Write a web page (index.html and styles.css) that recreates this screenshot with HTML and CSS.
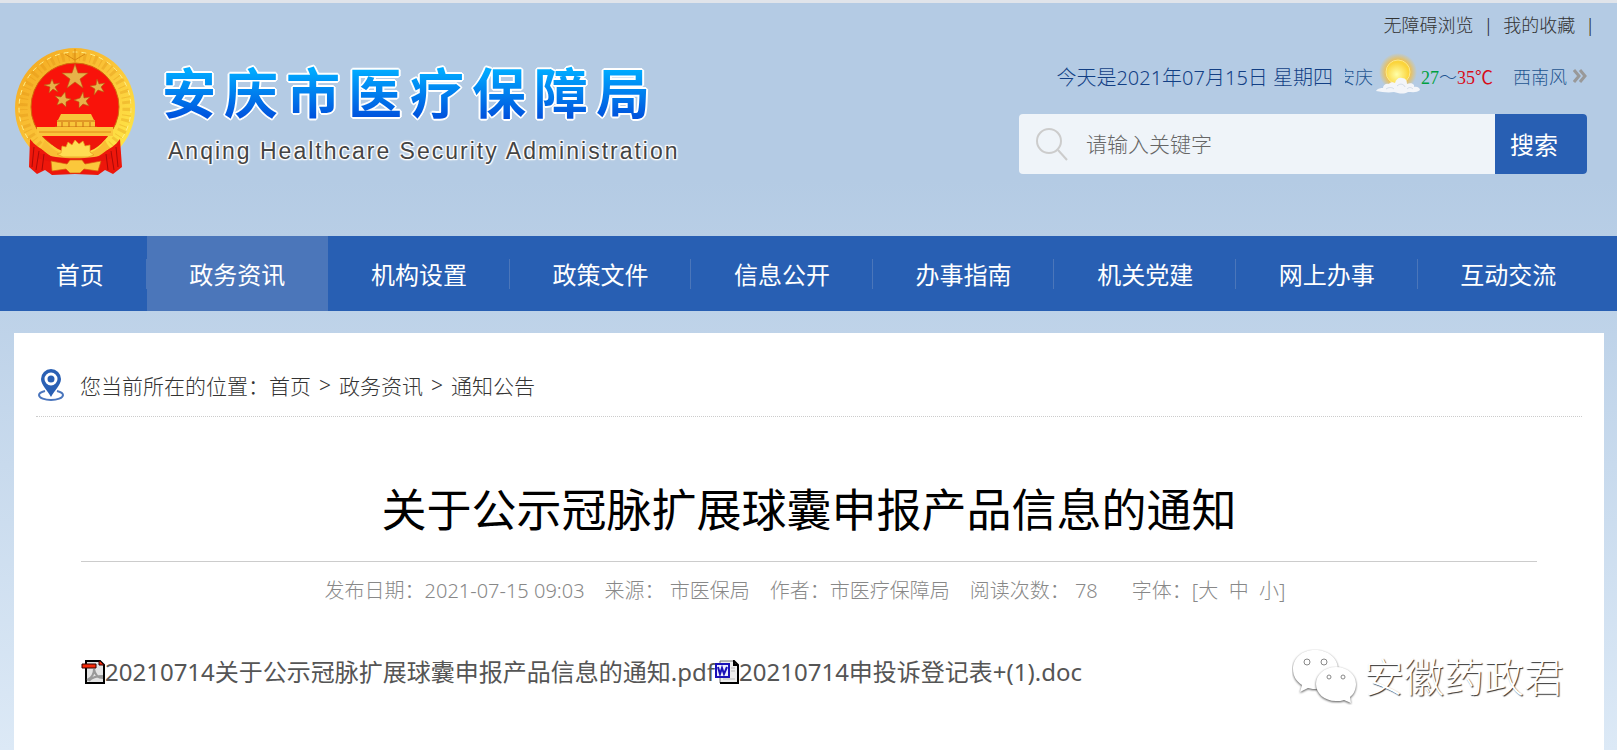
FILE: index.html
```html
<!DOCTYPE html>
<html lang="zh-CN">
    <head>
        <meta charset="utf-8">
        <title>关于公示冠脉扩展球囊申报产品信息的通知</title>
        <link rel="stylesheet" href="styles.css">
    </head>
    <body>
        <header class="header">
            <a class="logo" href="#">
                <svg class="emblem" viewBox="0 0 120 128" aria-hidden="true">
                    <defs>
                        <linearGradient id="gold" x1="0" y1="0" x2="1" y2="1">
                            <stop offset="0" stop-color="#f3a51c"/>
                            <stop offset=".5" stop-color="#fbc63a"/>
                            <stop offset="1" stop-color="#fff04a"/>
                        </linearGradient>
                    </defs>
                    <circle cx="60" cy="60" r="60" fill="url(#gold)"/>
                    <circle cx="60" cy="60" r="52" fill="none" stroke="#d98a12" stroke-width="9" stroke-dasharray="3 4 1 3" opacity=".3"/>
                    <circle cx="60" cy="60" r="56" fill="none" stroke="#fff08a" stroke-width="1" stroke-dasharray="5 4"/>
                    <path d="M60 1v13M50 6l10 6 10-6" stroke="#d98a12" stroke-width="1" fill="none"/>
                    <circle cx="60" cy="59" r="44" fill="#f9130a" stroke="#d2690c" stroke-width="1"/>
                    <g fill="#e8b149" stroke="#b85a10" stroke-width=".6">
                        <path d="M60 16l3 9h10l-8 6 3 9-8-6-8 6 3-9-8-6h10z"/>
                        <path d="M37 31l2 5 6-1-5 4 3 5-5-3-4 4 1-6-6-2 6-1z"/>
                        <path d="M82 31l-1 6-6 1 5 3-1 6 4-5 6 2-3-5 4-4-6 1z"/>
                        <path d="M50 44l1 6 5 1-5 3v5l-4-4-5 2 2-5-4-4 6 1z"/>
                        <path d="M68 44l1 6 6-1-4 4 3 5-6-2-4 4v-6l-5-2 6-2z"/>
                    </g>
                    <path d="M46 66h30l3 6H43zM42 72h38v7H42zM38 79h46v3H38z" fill="#f8c53a"/>
                    <path d="M42 73h38M40 79h42M47 82v-8M54 82v-8M61 82v-8M68 82v-8M75 82v-8" stroke="#c96a10" stroke-width="1"/>
                    <path d="M22 79h76v9H22z" fill="#fbc53b"/>
                    <path d="M24 84h72" stroke="#de8a17"/>
                    <path d="M30 89h62c-7 10-17 16-31 17-14-1-24-7-31-17z" fill="#ee170b"/>
                    <path d="M15 91c9 12 24 17 45 17s37-5 45-17l2 28-9 7-8-4-7 5-23-1-23 1-7-5-8 4-8-7z" fill="#ee170b"/>
                    <path d="M30 92c8 12 18 15 30 15s23-3 30-15l4 8c-9 9-20 14-34 14s-26-5-34-14z" fill="#f9bd34"/>
                    <path d="M46 105l1-7 4 1 2-5 4 3 3-5 4 4 4-3 2 5 5-1v7l4 3-6 2H48l-6-3z" fill="#ffdc52" stroke="#e79b1f" stroke-width=".7"/>
                    <path d="M24 105c20 7 52 7 72 0l1 5c-21 8-53 8-74 0z" fill="#e8130b"/>
                    <path d="M36 113l16 3 3-4h12l3 4 16-3-3 10-14-2-4 4H55l-4-4-14 2z" fill="#fbc73b" stroke="#d9610f" stroke-width=".7"/>
                    <path d="M19 99l-2 20M24 103l-3 19M29 106l-2 16M101 99l2 20M96 103l3 19M91 106l2 16" stroke="#a90a08" stroke-width="1"/>
                </svg>
                <span class="logo-text">
                    <span class="logo-name">安庆市医疗保障局</span>
                    <span class="logo-en" lang="en">Anqing Healthcare Security Administration</span>
                </span>
            </a>
            <div class="tools">
                <div class="links">
                    <a href="#">无障碍浏览</a><i>|</i>
                    <a href="#">我的收藏</a><i>|</i>
                </div>
                <div class="today">
                    <span class="date">今天是2021年07月15日 星期四</span>
                    <span class="city"><span>安庆</span></span>
                    <svg class="sun" viewBox="0 0 46 42" aria-hidden="true">
                        <defs>
                            <radialGradient id="glow">
                                <stop offset=".6" stop-color="#f3bf45"/>
                                <stop offset="1" stop-color="#f3bf45" stop-opacity="0"/>
                            </radialGradient>
                            <radialGradient id="ball" cx=".45" cy=".6">
                                <stop offset="0" stop-color="#ffffa8"/>
                                <stop offset="1" stop-color="#fbd43c"/>
                            </radialGradient>
                        </defs>
                        <circle cx="23" cy="19" r="19" fill="url(#glow)"/>
                        <circle cx="23" cy="19" r="12" fill="url(#ball)" stroke="#fbe88c"/>
                        <path d="M1 38c2-3 5-3 7-3 0-3 3-5 6-4 1-2 4-2 6-1 1-4 4-6 7-5 4 0 5 3 5 6 4-2 8 0 7 3 3-1 6 1 6 3-3 3-8 2-12 2-5 3-10 1-14 0-6 1-12 0-18-1z" fill="#f3f5f9"/>
                        <path d="M11 36c3-2 6-2 8 0M22 33c3-3 7-2 8 1M32 36c2-2 4-2 6 0" stroke="#d3dce8" stroke-width="1" fill="none"/>
                    </svg>
                    <span class="temp"><b class="low">27</b>～<b class="high">35℃</b></span>
                    <span class="wind">西南风</span>
                    <svg class="more" viewBox="0 0 14 14" aria-hidden="true">
                        <path d="M1 1l5 6-5 6M7 1l5 6-5 6" fill="none" stroke="#999" stroke-width="3"/>
                    </svg>
                </div>
                <form class="search">
                    <svg class="search-icon" viewBox="0 0 32 34" aria-hidden="true">
                        <circle cx="13" cy="14" r="12" fill="none" stroke="#ccc" stroke-width="2"/>
                        <path d="M22 23l9 10" stroke="#ccc" stroke-width="2"/>
                    </svg>
                    <input type="text" name="keyword" placeholder="请输入关键字" aria-label="请输入关键字">
                    <button type="button">搜索</button>
                </form>
            </div>
        </header>

        <nav class="nav">
            <a href="#">首页</a>
            <a class="active" href="#">政务资讯</a>
            <a href="#">机构设置</a>
            <a href="#">政策文件</a>
            <a href="#">信息公开</a>
            <a href="#">办事指南</a>
            <a href="#">机关党建</a>
            <a href="#">网上办事</a>
            <a href="#">互动交流</a>
        </nav>

        <main class="main">
            <div class="position">
                <svg class="pin" viewBox="0 0 26 32" aria-hidden="true">
                    <path d="M7 22c-4 1-6 2-6 4 0 3 6 5 12 5s12-2 12-5c0-2-2-3-6-4" fill="none" stroke="#4a75bc" stroke-width="2"/>
                    <path d="M13 28C10 22 3 16 3 10a10 10 0 0 1 20 0c0 6-7 12-10 18z" fill="#2a60b4"/>
                    <circle cx="13" cy="10" r="5" fill="#2a60b4" stroke="#fff" stroke-width="3"/>
                </svg>
                <span>您当前所在的位置：</span>
                <a href="#">首页</a><i>&gt;</i><a href="#">政务资讯</a><i>&gt;</i><a href="#">通知公告</a>
            </div>

            <article class="article">
                <h1>关于公示冠脉扩展球囊申报产品信息的通知</h1>
                <div class="info">
                    <span>发布日期：2021-07-15 09:03</span>
                    <span>来源： 市医保局</span>
                    <span>作者：市医疗保障局</span>
                    <span>阅读次数： 78</span>
                    <span class="size">字体：[<a href="#">大</a>&nbsp; <a href="#">中</a>&nbsp; <a href="#">小</a>]</span>
                </div>
                <p class="files">
                    <svg viewBox="0 0 24 24" aria-hidden="true">
                        <path d="M5 1h14l4 4v18H5z" fill="#e4e4e4" stroke="#000" stroke-width="2"/>
                        <path d="M6 20c5-2 7-6 7-11 1 6 4 9 9 9M8 21c3-4 8-5 14-5" stroke="#999" stroke-width="2" fill="none"/>
                        <path d="M1 4h14v4H1z" fill="#f52a08" stroke="#300" stroke-width="1"/>
                        <path d="M18 1h1l4 4H18z" fill="#f52a08" stroke="#300"/>
                    </svg><a href="#">20210714关于公示冠脉扩展球囊申报产品信息的通知.pdf</a><svg viewBox="0 0 24 24" aria-hidden="true">
                        <path d="M5 1h14l4 4v18H5z" fill="#eee" stroke="#777" stroke-width="1"/>
                        <path d="M5 23h18V5l-4-4v4h4" fill="none" stroke="#000" stroke-width="2"/>
                        <path d="M16 8h4M16 11h4M8 19h12" stroke="#bbb"/>
                        <path d="M1 4h13v13H1z" fill="#eef" stroke="#1a10b8" stroke-width="2"/>
                        <path d="M3 7l2 7 2-6 2 6 3-7" fill="none" stroke="#1a10b8" stroke-width="2"/>
                    </svg><a href="#">20210714申投诉登记表+(1).doc</a>
                </p>
            </article>
        </main>

        <div class="watermark">
            <svg viewBox="0 0 66 56" aria-hidden="true">
                <g fill="#fff">
                    <path d="M23 1C10 1 1 9 1 20c0 7 3 12 9 16l-2 7 8-4c3 1 6 1 10 1 12 0 20-9 20-20S36 1 23 1z"/>
                    <path d="M44 18c-12 0-20 8-20 17s8 17 20 17c3 0 6 0 8-1l7 3-1-6c4-3 6-8 6-13 0-9-8-17-20-17z"/>
                </g>
                <g fill="#fff" stroke="#888" stroke-width="1">
                    <circle cx="15" cy="13" r="3"/>
                    <circle cx="32" cy="13" r="3"/>
                    <circle cx="37" cy="28" r="2"/>
                    <circle cx="51" cy="28" r="2"/>
                </g>
            </svg>
            <span>安徽药政君</span>
        </div>
    </body>
</html>
```
FILE: styles.css
```css
body {
    margin: 0;
    min-height: 100vh;
    box-sizing: border-box;
    position: relative;
    display: flex;
    flex-direction: column;
    border-top: 3px solid #e0e4ea;
    background: linear-gradient(#b4cbe4 0, #b4cbe4 180px, #dce9f6 100%);
    font-family: "Noto Sans", "Noto Sans CJK SC", sans-serif;
    font-weight: 300;
    color: #333;
}
a {
    color: inherit;
    text-decoration: none;
}
i {
    font-style: normal;
}

/* header */
.header {
    display: flex;
    justify-content: space-between;
    height: 233px;
    padding: 0 30px 0 15px;
    box-sizing: border-box;
}
.logo {
    display: flex;
    align-items: flex-start;
    gap: 27px;
    padding-top: 45px;
}
.emblem {
    width: 120px;
    height: 128px;
}
.logo-text {
    display: flex;
    flex-direction: column;
    gap: 12px;
    padding-top: 13px;
}
.logo-name {
    font-size: 54px;
    line-height: 64px;
    font-weight: 700;
    letter-spacing: 8px;
    color: transparent;
    background: linear-gradient(#00aaff 15%, #0050dc 90%);
    -webkit-background-clip: text;
    background-clip: text;
    filter: drop-shadow(1px 1px 0 #fff) drop-shadow(-1px -1px 0 #fff) drop-shadow(1px -1px 0 #fff) drop-shadow(-1px 1px 0 #fff);
}
.logo-en {
    padding-left: 6px;
    font-family: "Liberation Sans", Arial, sans-serif;
    font-size: 23px;
    line-height: 28px;
    font-weight: 400;
    letter-spacing: 2px;
    color: #444;
    text-shadow: 1px 1px 1px #fff, -1px -1px 1px #fff, 1px -1px 1px #fff, -1px 1px 1px #fff, 0 0 3px #fff, 0 0 3px #fff;
}
.tools {
    display: flex;
    flex-direction: column;
    align-items: flex-end;
}
.links {
    display: flex;
    gap: 10px;
    margin-right: -8px;
    padding-top: 9px;
    font-size: 18px;
    line-height: 26px;
}
.links i {
    color: #222;
}
.today {
    display: flex;
    align-items: center;
    height: 42px;
    margin-top: 17px;
    font-size: 18px;
    color: #1f5590;
    white-space: nowrap;
}
.date {
    margin-right: 12px;
    font-size: 20px;
    color: #123f84;
}
.city {
    display: flex;
    justify-content: flex-end;
    width: 28px;
    overflow: hidden;
}
.sun {
    width: 46px;
    height: 42px;
    margin: 0 0 4px 2px;
}
.temp {
    font-family: "Liberation Serif", "Noto Sans CJK SC", serif;
}
.temp b {
    font-weight: 400;
}
.low {
    color: #00a040;
}
.high {
    color: #d80c18;
}
.wind {
    margin: 0 6px 0 20px;
}
.more {
    width: 14px;
    height: 14px;
}
.search {
    display: flex;
    align-items: center;
    width: 568px;
    height: 60px;
    margin-top: 17px;
    box-sizing: border-box;
    background: #eff4f9;
    border-radius: 4px;
    overflow: hidden;
}
.search-icon {
    width: 32px;
    height: 34px;
    margin: 0 18px 0 17px;
}
.search input {
    flex: 1;
    min-width: 0;
    padding: 0;
    border: 0;
    outline: 0;
    background: none;
    font: inherit;
    font-size: 21px;
}
.search input::placeholder {
    color: #666;
}
.search button {
    width: 92px;
    height: 60px;
    padding: 0 14px 2px 0;
    border: 0;
    background: #285fb3;
    color: #fff;
    font: inherit;
    font-size: 24px;
    font-weight: 400;
}

/* nav */
.nav {
    display: flex;
    height: 75px;
    padding: 0 18px 0 13px;
    background: #285fb3;
}
.nav a {
    flex: 1 1 auto;
    display: flex;
    align-items: center;
    justify-content: center;
    font-size: 24px;
    font-weight: 400;
    color: #fff;
    background: linear-gradient(#4b76ba, #4b76ba) no-repeat right center / 1px 30px;
}
.nav a:last-child {
    background: none;
}
.nav .active {
    background: #4b76ba;
}

/* content */
.main {
    flex: 1;
    margin: 22px 13px 0 14px;
    padding: 24px 22px 0;
    background: #fff;
}
.position {
    display: flex;
    align-items: center;
    height: 56px;
    padding: 0 2px 3px;
    border-bottom: 1px dotted #ccc;
    font-size: 21px;
}
.position i {
    margin: 0 8px;
    font-size: 21px;
}
.pin {
    width: 26px;
    height: 32px;
    margin-right: 16px;
}
.article {
    padding: 58px 45px 0;
}
.article h1 {
    margin: 0;
    padding-bottom: 16px;
    border-bottom: 1px solid #ccc;
    font-size: 45px;
    line-height: 70px;
    font-weight: 400;
    text-align: center;
    color: #000;
}
.info {
    display: flex;
    justify-content: center;
    gap: 20px;
    padding: 14px 8px 14px 0;
    font-size: 20px;
    line-height: 30px;
    color: #888;
}
.size {
    margin-left: 14px;
}
.files {
    display: flex;
    align-items: center;
    margin: 32px 0 0;
    font-size: 24px;
    line-height: 40px;
    font-weight: 400;
    color: #555;
}
.files svg {
    width: 24px;
    height: 24px;
}

.watermark {
    position: absolute;
    right: 53px;
    bottom: 43px;
    display: flex;
    align-items: center;
    gap: 6px;
    font-size: 40px;
    line-height: 60px;
    color: #fff;
    text-shadow: 1px 1px 1px #333;
}
.watermark svg {
    width: 66px;
    height: 56px;
}
.watermark path {
    filter: drop-shadow(0 1px 1px #555);
}
```
